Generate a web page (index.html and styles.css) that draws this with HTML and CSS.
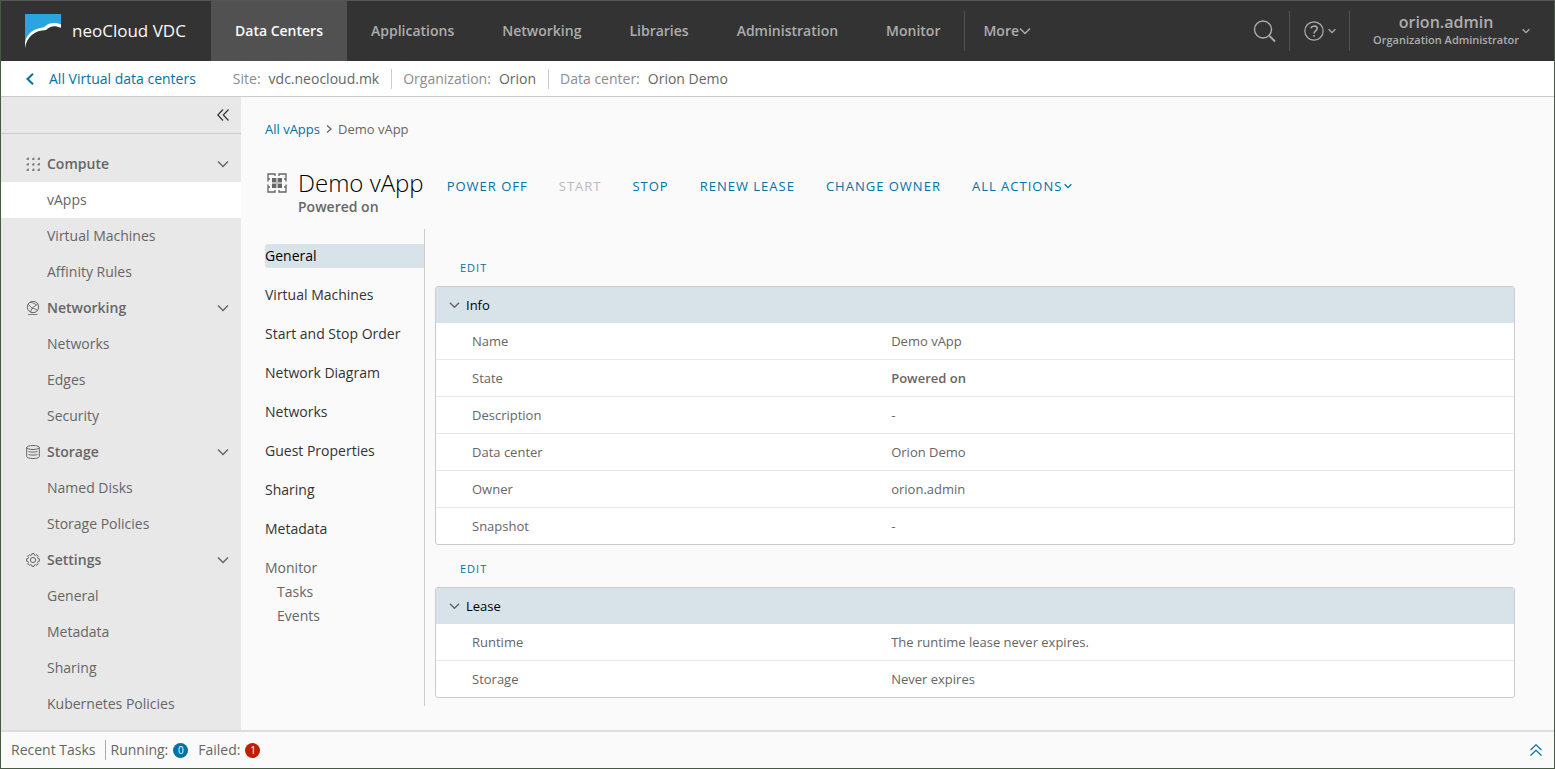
FILE: index.html
```html
<!DOCTYPE html>
<html lang="en">
<head>
<meta charset="utf-8">
<title>neoCloud VDC - Demo vApp</title>
<link rel="stylesheet" href="styles.css">
</head>
<body>
<svg class="defs" aria-hidden="true">
  <symbol id="chevron" viewBox="0 0 12 12"><path d="M1 3.500 6 8.500 11 3.500" fill="none" stroke="currentColor"/></symbol>
  <symbol id="chevrons-left" viewBox="0 0 12 12"><path d="M6 .5.8 6 6 11.500M11.500.5 6.300 6l5.200 5.500" fill="none" stroke="currentColor" stroke-width="1.200"/></symbol>
</svg>
<div class="app">
  <header class="header">
    <a class="brand" href="#">
      <svg class="logo" viewBox="0 0 36 34" aria-hidden="true">
        <path d="M0 0H36V11C29 8.500 23 9 19 14 8 15 2 20 0 29Z" fill="#29a6df"/>
        <path d="M0 28C2 19.500 8 14.500 19 13.200 23 8.800 29 7.800 36 10.300V13.800C30 11 25 11.800 21 16 10 16.500 2 22 0 34Z" fill="#fff"/>
      </svg>
      <span>neoCloud VDC</span>
    </a>
    <nav class="main-nav" aria-label="Main">
      <a class="active" href="#">Data Centers</a>
      <a href="#">Applications</a>
      <a href="#">Networking</a>
      <a href="#">Libraries</a>
      <a href="#">Administration</a>
      <a href="#">Monitor</a>
    </nav>
    <button class="more" type="button">More<svg class="i12" aria-hidden="true"><use href="#chevron"/></svg></button>
    <div class="header-actions">
      <button class="search" type="button" aria-label="Search">
        <svg class="i24" viewBox="0 0 24 24" fill="none" stroke="currentColor" aria-hidden="true"><circle cx="10" cy="10.500" r="8.500" stroke-width="1.400"/><path d="m16.500 17 5.500 5.500" stroke-width="1.800"/></svg>
      </button>
      <button class="help" type="button" aria-label="Help">
        <svg class="i20" viewBox="0 0 20 20" fill="none" stroke="currentColor" stroke-width="1.200" aria-hidden="true"><circle cx="10" cy="10" r="9.200"/><path d="M6.800 7.200C7.500 5.500 8.700 5 10.200 5c1.900 0 3 1.100 3 2.600C13.200 10 10 9.800 10 12.500M10 14v1.800" stroke-width="1.500"/></svg>
        <svg class="i8" aria-hidden="true"><use href="#chevron"/></svg>
      </button>
      <button class="user" type="button">
        <span class="user-text"><span class="user-name">orion.admin</span><span class="user-role">Organization Administrator</span></span>
        <svg class="i8" aria-hidden="true"><use href="#chevron"/></svg>
      </button>
    </div>
  </header>

  <div class="context">
    <a class="back" href="#"><svg viewBox="0 0 8 12" aria-hidden="true"><path d="M7 .8 1.500 6 7 11.200" fill="none" stroke="currentColor" stroke-width="2"/></svg>All Virtual data centers</a>
    <dl class="facts">
      <div><dt>Site:</dt><dd>vdc.neocloud.mk</dd></div>
      <div><dt>Organization:</dt><dd>Orion</dd></div>
      <div><dt>Data center:</dt><dd>Orion Demo</dd></div>
    </dl>
  </div>

  <div class="body">
    <aside class="sidebar">
      <button class="collapse" type="button" aria-label="Collapse menu"><svg class="i12" aria-hidden="true"><use href="#chevrons-left"/></svg></button>
      <nav class="side-nav" aria-label="Data center">
        <button type="button" class="group">
          <svg class="i14" viewBox="0 0 14 14" fill="currentColor" aria-hidden="true"><path d="M.5 1.500 2 .5h1V3H.5zM6 1.500 7.500.5h1V3H6zM11.500 1.500 13 .5h1V3h-2.500zM.5 7 2 6h1v2.500H.5zM6 7l1.500-1h1v2.500H6zM11.500 7 13 6h1v2.500h-2.500zM.5 12.500 2 11.500h1V14H.5zM6 12.500l1.500-1h1V14H6zM11.500 12.500l1.500-1h1V14h-2.500z" opacity=".75"/></svg>
          <span>Compute</span><svg class="i12" aria-hidden="true"><use href="#chevron"/></svg>
        </button>
        <a class="active" href="#">vApps</a>
        <a href="#">Virtual Machines</a>
        <a href="#">Affinity Rules</a>
        <button type="button" class="group">
          <svg class="i14" viewBox="0 0 14 14" fill="none" stroke="currentColor" aria-hidden="true"><circle cx="7" cy="6" r="5.700"/><path d="M2.200 3.200 6 7.200l5.500-4M4 1.300c2 .2 4.500 1 6.500 2.700M6 7.200 4.500 11M6 7.200c2 .3 4 1 5.500 2M2 13.600h9.500" stroke-width=".9"/></svg>
          <span>Networking</span><svg class="i12" aria-hidden="true"><use href="#chevron"/></svg>
        </button>
        <a href="#">Networks</a>
        <a href="#">Edges</a>
        <a href="#">Security</a>
        <button type="button" class="group">
          <svg class="i14" viewBox="0 0 14 14" fill="none" stroke="currentColor" aria-hidden="true"><ellipse cx="7" cy="2.500" rx="6.300" ry="2"/><path d="M.7 2.500v9c0 2.700 12.600 2.700 12.600 0v-9M2.500 6.500c2 .8 7 .8 9 0M2.500 9.500c2 .8 7 .8 9 0"/></svg>
          <span>Storage</span><svg class="i12" aria-hidden="true"><use href="#chevron"/></svg>
        </button>
        <a href="#">Named Disks</a>
        <a href="#">Storage Policies</a>
        <button type="button" class="group">
          <svg class="i14" viewBox="0 0 14 14" fill="none" stroke="currentColor" stroke-linejoin="round" aria-hidden="true"><circle cx="7" cy="7" r="2.600"/><path d="M5.900.6h2.200l.4 1.500 1 .4 1.300-.8 1.500 1.500-.8 1.300.4 1 1.500.4v2.200l-1.500.4-.4 1 .8 1.300-1.500 1.500-1.300-.8-1 .4-.4 1.500H5.900l-.4-1.500-1-.4-1.300.8-1.500-1.500.8-1.300-.4-1L.6 8.100V5.900l1.500-.4.4-1-.8-1.300 1.500-1.500 1.300.8 1-.4z"/></svg>
          <span>Settings</span><svg class="i12" aria-hidden="true"><use href="#chevron"/></svg>
        </button>
        <a href="#">General</a>
        <a href="#">Metadata</a>
        <a href="#">Sharing</a>
        <a href="#">Kubernetes Policies</a>
      </nav>
    </aside>

    <main class="content">
      <nav class="crumbs" aria-label="Breadcrumb"><a href="#">All vApps</a><svg viewBox="0 0 6 8" aria-hidden="true"><path d="m1 .5 4 3.500-4 3.500" fill="none" stroke="currentColor" stroke-width="1.300"/></svg><span>Demo vApp</span></nav>

      <div class="title-row">
        <svg class="vapp-icon" viewBox="0 0 20 20" fill="none" stroke="currentColor" stroke-width="1.300" aria-hidden="true"><path d="M1 6V1h7v2M12 3V1h7v5M19 12v7h-7v-2M8 17v2H1v-7M1 8.500V6h2M17 6h2v2.500M19 11.500V14h-2M3 14H1v-2.500"/><path d="M5 5h10v10H5z" fill="#bbb" stroke="none"/><path d="M5 5h4v4H5zM11 5h4v4h-4zM5 11h4v4H5zM11 11h4v4h-4z" fill="currentColor" stroke="none"/></svg>
        <div class="title">
          <h1>Demo vApp</h1>
          <p>Powered on</p>
        </div>
        <div class="actions">
          <button type="button">POWER OFF</button>
          <button type="button" disabled>START</button>
          <button type="button">STOP</button>
          <button type="button">RENEW LEASE</button>
          <button type="button">CHANGE OWNER</button>
          <button type="button">ALL ACTIONS<svg class="i8" aria-hidden="true"><use href="#chevron"/></svg></button>
        </div>
      </div>

      <div class="detail">
        <nav class="tabs" aria-label="vApp">
          <a class="active" href="#">General</a>
          <a href="#">Virtual Machines</a>
          <a href="#">Start and Stop Order</a>
          <a href="#">Network Diagram</a>
          <a href="#">Networks</a>
          <a href="#">Guest Properties</a>
          <a href="#">Sharing</a>
          <a href="#">Metadata</a>
          <div class="tab-group">
            <span>Monitor</span>
            <a href="#">Tasks</a>
            <a href="#">Events</a>
          </div>
        </nav>
        <div class="panels">
          <section>
            <button class="edit" type="button">EDIT</button>
            <div class="card">
              <button class="card-head" type="button"><svg class="i12" aria-hidden="true"><use href="#chevron"/></svg>Info</button>
              <table>
                <tr><th scope="row">Name</th><td>Demo vApp</td></tr>
                <tr><th scope="row">State</th><td><strong>Powered on</strong></td></tr>
                <tr><th scope="row">Description</th><td>-</td></tr>
                <tr><th scope="row">Data center</th><td>Orion Demo</td></tr>
                <tr><th scope="row">Owner</th><td>orion.admin</td></tr>
                <tr><th scope="row">Snapshot</th><td>-</td></tr>
              </table>
            </div>
          </section>
          <section>
            <button class="edit" type="button">EDIT</button>
            <div class="card">
              <button class="card-head" type="button"><svg class="i12" aria-hidden="true"><use href="#chevron"/></svg>Lease</button>
              <table>
                <tr><th scope="row">Runtime</th><td>The runtime lease never expires.</td></tr>
                <tr><th scope="row">Storage</th><td>Never expires</td></tr>
              </table>
            </div>
          </section>
        </div>
      </div>
    </main>
  </div>

  <footer class="tasks">
    <span class="tasks-title">Recent Tasks</span>
    <span class="count">Running: <b class="badge">0</b></span>
    <span class="count">Failed: <b class="badge failed">1</b></span>
    <button type="button" aria-label="Expand tasks"><svg class="i12" viewBox="0 0 12 12" aria-hidden="true"><path d="M.5 6 6 .8 11.500 6M.5 11.500 6 6.300l5.500 5.200" fill="none" stroke="currentColor" stroke-width="1.200"/></svg></button>
  </footer>
</div>
</body>
</html>
```
FILE: styles.css
```css
* { box-sizing: border-box; }
body {
  margin: 0;
  font: 14px/24px "Open Sans", "Noto Sans", sans-serif;
  color: #666;
  background: #fafafa;
}
a { color: inherit; text-decoration: none; }
button {
  font: inherit;
  color: inherit;
  background: none;
  border: 0;
  padding: 0;
  cursor: pointer;
}
svg { flex: none; }
h1, p, dl, dd { margin: 0; }
.defs { position: absolute; width: 0; height: 0; }
.i8 { width: 8px; height: 8px; stroke-width: 2; }
.i12 { width: 12px; height: 12px; stroke-width: 1.5; }
.i14 { width: 14px; height: 14px; }
.i20 { width: 20px; height: 20px; }
.i24 { width: 24px; height: 24px; }

.app {
  display: flex;
  flex-direction: column;
  min-height: 100vh;
  border: 1px solid #455943;
  border-top-color: #555;
}

.header {
  display: flex;
  align-items: center;
  height: 60px;
  background: #333;
  color: #adadad;
  font-weight: 600;
}
.brand {
  display: flex;
  align-items: center;
  gap: 11px;
  width: 210px;
  padding-left: 24px;
  color: #fafafa;
  font-size: 17px;
  font-weight: 400;
}
.logo { width: 36px; height: 34px; }
.main-nav { display: flex; }
.main-nav a { padding: 0 24px; line-height: 60px; }
.main-nav .active { background: #515151; color: #fafafa; }
.more {
  display: flex;
  align-items: center;
  height: 40px;
  padding-left: 18px;
  border-left: 1px solid #515151;
}
.header-actions { display: flex; align-items: center; margin-left: auto; }
.search { display: flex; padding-right: 12px; }
.help {
  display: flex;
  align-items: center;
  gap: 4px;
  height: 40px;
  padding: 0 13px 0 14px;
  border: solid #515151;
  border-width: 0 1px;
}
.user { display: flex; align-items: center; gap: 3px; padding: 0 24px 0 23px; }
.user-text { display: flex; flex-direction: column; line-height: 18px; }
.user-name { font-size: 16px; }
.user-role { font-size: 11px; }

.context {
  display: flex;
  align-items: center;
  gap: 37px;
  height: 36px;
  padding-left: 25px;
  background: #fff;
  border-bottom: 1px solid #ccc;
}
.back { display: flex; align-items: center; gap: 15px; color: #0072a3; }
.back svg { width: 8px; height: 12px; }
.facts { display: flex; }
.facts div { display: flex; gap: 8px; height: 20px; align-items: center; }
.facts div + div { margin-left: 12px; padding-left: 11px; border-left: 1px solid #ccc; }
.facts dt { color: #8c8c8c; }

.body { display: flex; flex: 1; }
.sidebar { width: 240px; flex: none; background: #e8e8e8; }
.collapse {
  display: flex;
  justify-content: flex-end;
  align-items: center;
  width: 100%;
  height: 37px;
  padding-right: 12px;
  border-bottom: 1px solid #ccc;
  color: #333;
}
.side-nav { display: flex; flex-direction: column; padding-top: 12px; }
.side-nav a { padding-left: 46px; line-height: 36px; }
.side-nav .active { background: #fff; }
.group {
  display: flex;
  align-items: center;
  gap: 7px;
  height: 36px;
  padding: 0 12px 0 25px;
  font-weight: 600;
}
.group span { flex: 1; text-align: left; }

.content { flex: 1; min-width: 0; padding: 20px 39px 24px 24px; }
.crumbs { display: flex; align-items: center; gap: 6px; font-size: 13px; }
.crumbs a { color: #0072a3; }
.crumbs svg { width: 6px; height: 8px; }
.title-row { display: flex; align-items: flex-start; margin-top: 29px; }
.vapp-icon { width: 20px; height: 20px; margin: 3px 11px 0 2px; }
.title h1 { font-size: 24px; line-height: 25px; font-weight: 300; color: #000; }
.title p { font-weight: 600; }
.actions {
  display: flex;
  gap: 31px;
  margin: 4px 0 0 23px;
  font-size: 13px;
  color: #0072a3;
}
.actions button { display: flex; align-items: center; gap: 2px; letter-spacing: 1px; }
.actions button:disabled { color: #bbb; }

.detail { display: flex; margin-top: 10px; }
.tabs {
  display: flex;
  flex-direction: column;
  gap: 15px;
  flex: none;
  width: 160px;
  padding-top: 15px;
  border-right: 1px solid #ccc;
  color: #333;
}
.tabs .active { background: #d8e3e9; color: #000; border-radius: 3px 0 0 3px; }
.tab-group { display: flex; flex-direction: column; color: #666; }
.tab-group a { padding-left: 12px; }
.panels { flex: 1; padding: 27px 0 8px 10px; font-size: 13px; }
.panels section + section { margin-top: 12px; }
.edit {
  display: block;
  margin-left: 25px;
  font-size: 11px;
  letter-spacing: 1px;
  color: #0072a3;
}
.card {
  margin-top: 6px;
  border: 1px solid #ccc;
  border-radius: 3px;
  background: #fff;
  overflow: hidden;
}
.card-head {
  display: flex;
  align-items: center;
  gap: 6px;
  width: 100%;
  height: 36px;
  padding-left: 13px;
  background: #d8e3e9;
  color: #000;
}
.card-head svg { width: 11px; color: #666; }
table { width: 100%; border-spacing: 0; table-layout: fixed; }
th, td { height: 37px; padding: 0 24px; text-align: left; font-weight: 400; border-bottom: 1px solid #e8e8e8; }
tr:last-child > * { height: 36px; border-bottom: 0; }
th { width: 40%; padding-left: 36px; font-weight: 500; }
strong { font-weight: 600; }

.tasks {
  display: flex;
  align-items: center;
  height: 38px;
  padding: 0 12px 0 10px;
  border-top: 2px solid #ddd;
}
.tasks-title { height: 20px; line-height: 20px; padding-right: 10px; margin-right: 4px; border-right: 1px solid #aaa; }
.count { display: flex; align-items: center; gap: 5px; margin-right: 10px; }
.badge {
  min-width: 15px;
  height: 15px;
  border-radius: 8px;
  background: #0072a3;
  color: #fff;
  font-size: 10px;
  font-weight: 400;
  line-height: 15px;
  text-align: center;
}
.badge.failed { background: #c21d00; }
.tasks button { display: flex; margin-left: auto; color: #0072a3; }
```
